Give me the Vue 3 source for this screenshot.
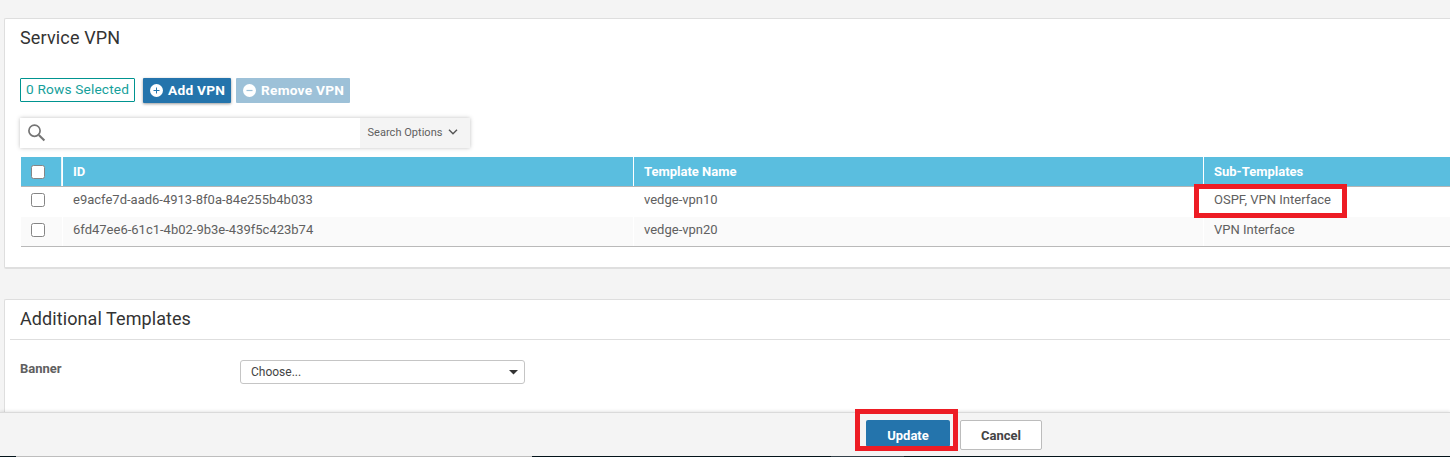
<script setup>
const columns = ['ID', 'Template Name', 'Sub-Templates']
const rows = [
  { id: 'e9acfe7d-aad6-4913-8f0a-84e255b4b033', name: 'vedge-vpn10', sub: 'OSPF, VPN Interface', marked: true },
  { id: '6fd47ee6-61c1-4b02-9b3e-439f5c423b74', name: 'vedge-vpn20', sub: 'VPN Interface', marked: false },
]
</script>

<template>
  <div class="page">
    <section class="panel service">
      <h2>Service VPN</h2>
      <div class="toolbar">
        <span class="count">0 Rows Selected</span>
        <button class="btn add">
          <svg width="13" height="13" viewBox="0 0 13 13"><circle cx="6.5" cy="6.5" r="6.5" fill="#fff" /><path d="M6.5 3.5v6M3.5 6.5h6" stroke="#2474ac" stroke-width="1" /></svg>
          <span>Add VPN</span>
        </button>
        <button class="btn remove">
          <svg width="13" height="13" viewBox="0 0 13 13"><circle cx="6.5" cy="6.5" r="6.5" fill="#fff" /><path d="M3.5 6.5h6" stroke="#9dc1d8" stroke-width="1.2" /></svg>
          <span>Remove VPN</span>
        </button>
      </div>
      <div class="search">
        <svg class="lens" width="18" height="18" viewBox="0 0 18 18" fill="none" stroke="#757575"><circle cx="6.5" cy="6.7" r="5.6" stroke-width="1.7" /><path d="M10.8 11l5.6 5.6" stroke-width="2.1" /></svg>
        <div class="options">
          <span>Search Options</span>
          <svg width="10" height="6" viewBox="0 0 10 6" fill="none" stroke="#555" stroke-width="1.4"><path d="M1 .8l4 4 4-4" /></svg>
        </div>
      </div>
      <div class="table">
        <div class="row head">
          <div class="cell check"><i class="box"></i></div>
          <div v-for="c in columns" :key="c" class="cell">{{ c }}</div>
        </div>
        <div v-for="r in rows" :key="r.id" class="row body">
          <div class="cell check"><i class="box"></i></div>
          <div class="cell">{{ r.id }}</div>
          <div class="cell">{{ r.name }}</div>
          <div class="cell">{{ r.sub }}<i v-if="r.marked" class="mark mark-sub"></i></div>
        </div>
      </div>
    </section>

    <section class="panel additional">
      <h2>Additional Templates</h2>
      <div class="field">
        <label>Banner</label>
        <div class="select">
          <span>Choose...</span>
          <svg width="9" height="5" viewBox="0 0 9 5"><path d="M0 0h9L4.5 4.5z" fill="#333" /></svg>
        </div>
      </div>
    </section>

    <footer>
      <div class="update-wrap">
        <button class="update">Update</button>
        <i class="mark mark-update"></i>
      </div>
      <button class="cancel">Cancel</button>
    </footer>
    <div class="strip"><i class="dark a"></i><i class="grey"></i><i class="dark b"></i><i class="slate"></i><i class="dark c"></i></div>
  </div>
</template>

<style>
body { margin: 0; overflow: hidden; }
</style>

<style scoped>
* { box-sizing: border-box; }
.page {
  width: 1450px; height: 457px; overflow: hidden; background: #f4f4f4;
  padding-top: 18px; display: flex; flex-direction: column;
  font-family: Roboto, "Liberation Sans", sans-serif; font-size: 13px; color: #606060;
}
button { font-family: inherit; margin: 0; padding: 0; }
.panel { margin-left: 4px; background: #fff; border: 1px solid #dedede; border-right: 0; border-radius: 2px 0 0 2px; flex: none; }
h2 { margin: 0; font-size: 18px; font-weight: 400; color: #333; line-height: 38px; padding-left: 10px; margin-left: 5px; letter-spacing: .08px; }
.service { height: 251px; border-bottom: 2px solid #dfdfdf; }
.service h2 { letter-spacing: .15px; }
.toolbar { display: flex; align-items: flex-start; margin: 21px 0 0 15px; height: 25px; }
.count { width: 115px; height: 24px; border: 1px solid #009490; border-radius: 1px; color: #169f9b; font-size: 13.7px; letter-spacing: .16px; line-height: 21px; padding-left: 5px; white-space: nowrap; }
.btn { height: 25px; border: 0; border-radius: 1px; color: #fff; font-size: 13.7px; letter-spacing: .24px; font-weight: 700; display: flex; align-items: center; padding-left: 7px; gap: 5px; white-space: nowrap; }
.btn svg { flex: none; }
.btn span { padding-bottom: 2px; }
.add { width: 88px; margin-left: 8px; background: #2474ac; box-shadow: 0 1px 3px rgba(0, 0, 0, .4); }
.remove { width: 114px; margin-left: 5px; background: #9dc1d8; }
.search { width: 450px; height: 30px; margin: 15px 0 0 15px; display: flex; background: #fff; box-shadow: 0 0 4px rgba(0, 0, 0, .25); }
.lens { margin: 6px 0 0 8px; }
.options { margin-left: auto; width: 110px; background: #f4f4f4; display: flex; align-items: center; gap: 6px; padding: 0 0 2px 7.5px; font-size: 11px; letter-spacing: .03px; white-space: nowrap; }
.table { margin: 9px 0 0 16px; border-bottom: 1px solid #b9b9b9; }
.row { display: grid; grid-template-columns: 41px 571px 570px 1fr; }
.head { height: 30px; border-bottom: 1px solid #b5b5b5; color: #fff; font-weight: 700; }
.head .cell { background: #5abedf; line-height: 29px; border-left: 1px solid #fff; }
.cell { padding-left: 10px; position: relative; white-space: nowrap; }
.cell.check { border-right: 1px solid #e8f4f8; }
.body { height: 30px; }
.body .cell { border-left: 1px solid #fff; line-height: 26px; }
.body .cell.check, .head .cell.check { border-left: 0; }
.body .cell.check { border-right: 0; }
.body:last-child { height: 29px; }
.body:last-child .cell { background: #fafafa; }
.box { display: block; width: 14px; height: 14px; border: 1px solid #858585; border-radius: 2.5px; background: #fff; margin-top: 6px; }
.head .box { margin-top: 8px; }
.mark { position: absolute; border: 5px solid #ed1c24; }
.mark-sub { left: -10px; top: -3px; width: 153px; height: 34px; z-index: 2; }
.additional { margin-top: 30px; height: 113px; border-bottom: 0; border-radius: 2px 0 0 0; }
.additional h2 { border-bottom: 1px solid #dedede; height: 40px; }
.field { display: flex; padding-left: 15px; margin-top: 20px; }
label { width: 220px; font-weight: 700; line-height: 18px; font-size: 13px; color: #606060; }
.select { width: 285px; height: 24px; border: 1px solid #c5c5c5; border-radius: 3px; padding: 0 6px 0 10px; display: flex; align-items: center; justify-content: space-between; font-size: 12px; color: #444; }
footer { flex: none; height: 44px; background: #f4f4f4; border-top: 1px solid #dadada; box-shadow: 0 -1px 3px rgba(0, 0, 0, .1); display: flex; padding: 7px 0 0 866px; position: relative; }
.update-wrap { position: relative; width: 84px; height: 30px; }
.update, .cancel { font-size: 13px; font-weight: 700; height: 30px; border-radius: 2px; }
.update { width: 84px; height: 27px; padding-top: 4px; border: 0; background: #2474ac; color: #fff; }
.mark-update { left: -11px; top: -11px; width: 103px; height: 42px; }
.cancel { width: 82px; margin-left: 10px; background: #fff; border: 1px solid #bcbcbc; color: #444; }
.strip { display: flex; height: 1px; flex: none; }
.dark { background: #04141a; }
.a { width: 16px; }
.grey { width: 516px; background: #c0c0c0; }
.b { width: 299px; }
.slate { width: 73px; background: #34424a; }
.c { flex: 1; }
</style>
